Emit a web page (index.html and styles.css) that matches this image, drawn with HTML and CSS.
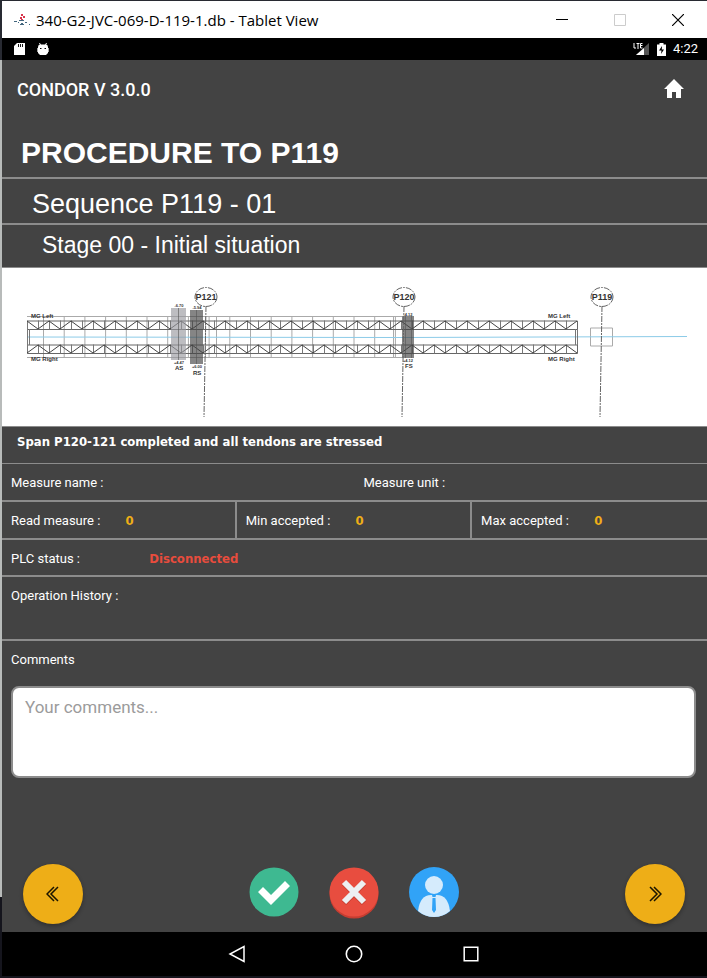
FILE: index.html
```html
<!DOCTYPE html>
<html lang="en">
<head>
<meta charset="utf-8">
<meta name="viewport" content="width=device-width, initial-scale=1">
<title>340-G2-JVC-069-D-119-1.db - Tablet View</title>
<link rel="stylesheet" href="styles.css">
</head>
<body>
<div class="window">
  <div class="titlebar">
    <svg class="titlebar-logo" width="18" height="14" viewBox="0 0 18 14" aria-hidden="true">
      <path d="M8 2h2M7 5h2M10 4h2M8 7h2" stroke="#d8344c" stroke-width="2"/>
      <path d="M1 8.500h3M5 9.500h1M6 7.500h5M8 10.500h2M12 9.500h2M16 11.500h1M7 11.500h4" stroke="#42667e" stroke-width="1"/>
    </svg>
    <span class="titlebar-text">340-G2-JVC-069-D-119-1.db - Tablet View</span>
    <button class="win-button" aria-label="Minimize"><svg width="12" height="12" viewBox="0 0 12 12"><path d="M0 5.500h12" stroke="#000"/></svg></button>
    <button class="win-button" aria-label="Maximize" disabled><svg width="12" height="12" viewBox="0 0 12 12"><path d="M.5.5h11v11H.5z" fill="none" stroke="#ccc"/></svg></button>
    <button class="win-button" aria-label="Close"><svg width="12" height="12" viewBox="0 0 12 12"><path d="M0 0l12 12M12 0L0 12" stroke="#000" stroke-width="1.200"/></svg></button>
  </div>

  <div class="statusbar">
    <svg width="11" height="12" viewBox="0 0 11 12" aria-hidden="true"><path d="M3 0h8v12H0V3z" fill="#fff"/><path d="M4.500 1v3M6.500 1v3M8.500 1v3" stroke="#000" stroke-width=".9"/></svg>
    <svg class="status-robot" width="12" height="13" viewBox="0 0 12 13" aria-hidden="true"><path d="M2.500 0l1 2M9.500 0l-1 2" stroke="#fff"/><path d="M1 4Q1 1.500 3 1.500h6q2 0 2 2.500V10l-2 2H3l-2-2z" fill="#fff"/><path d="M0 5h1v4H0zM11 5h1v4h-1z" fill="#aaa"/><path d="M3 5h1.500v1H3zM7.500 5H9v1H7.500z" fill="#000"/></svg>
    <span class="status-space"></span>
    <svg width="17" height="14" viewBox="0 0 17 14" aria-hidden="true"><path d="M16 1v12H3z" fill="#555"/><path d="M11 6v7H3z" fill="#fff"/><path d="M1 1v5h2M3.500 1.500h3M5 1.500V7M9.500 1.500H7.500V6h2M7.500 3.500h2" fill="none" stroke="#fff"/></svg>
    <svg class="status-battery" width="9" height="13" viewBox="0 0 9 13" aria-hidden="true"><path d="M0 1.500h2.500V0h4v1.500H9V13H0z" fill="#fff"/><path d="M5 3L2 7.500h2.500L4 11l3-4.500H4.800z" fill="#000"/></svg>
    <span class="status-time">4:22</span>
  </div>

  <header class="appbar">
    <span class="appbar-title">CONDOR V 3.0.0</span>
    <button class="icon-button" aria-label="Home"><svg width="24" height="24" viewBox="0 0 24 24"><path d="M10 20v-6h4v6h5v-9h3L12 1 2 11h3v9z" fill="#fff"/></svg></button>
  </header>

  <main class="content">
    <h1 class="procedure">PROCEDURE TO P119</h1>
    <h2 class="sequence">Sequence P119 - 01</h2>
    <h3 class="stage">Stage 00 - Initial situation</h3>

    <svg class="diagram" viewBox="0 0 705 158" role="img" aria-label="Gantry position between piers P121, P120 and P119">
      <!-- span deck grid -->
      <g fill="none" stroke="#aaa">
        <path d="M25 48.500H400M25 89.500H400"/>
        <path d="M41 69H400" stroke-width="41" stroke-dasharray="1 19.700"/>
        <path d="M203.500 48v41M214.500 48v41M391.500 48v41"/>
        <path d="M588.500 60v18h22V60z"/>
      </g>
      <!-- axis -->
      <path d="M25 69L400 69.500 685 68.500" fill="none" stroke="#8ccbe8"/>
      <!-- gantry trusses -->
      <g fill="none" stroke="#444">
        <path d="M25.500 53H575.500V61.500H25.500zM25.500 77H575.500V85.500H25.500z" stroke="#666"/>
        <path d="M25 57H575M25 81H575" stroke-width="9" stroke-dasharray="1 10" stroke="#777"/>
        <path d="M25.500 61v16M27.500 61v16M573.500 61v16M575.500 61v16" stroke="#777"/>
        <path d="M25 53l11 8 11-8 11 8 11-8 11 8 11-8 11 8 11-8 11 8 11-8 11 8 11-8 11 8 11-8 11 8 11-8 11 8 11-8 11 8 11-8 11 8 11-8 11 8 11-8 11 8 11-8 11 8 11-8 11 8 11-8 11 8 11-8 11 8 11-8 11 8 11-8 11 8 11-8 11 8 11-8 11 8 11-8 11 8 11-8 11 8 11-8 11 8 11-8 11 8 11-8"/>
        <path d="M25 85l11-8 11 8 11-8 11 8 11-8 11 8 11-8 11 8 11-8 11 8 11-8 11 8 11-8 11 8 11-8 11 8 11-8 11 8 11-8 11 8 11-8 11 8 11-8 11 8 11-8 11 8 11-8 11 8 11-8 11 8 11-8 11 8 11-8 11 8 11-8 11 8 11-8 11 8 11-8 11 8 11-8 11 8 11-8 11 8 11-8 11 8 11-8 11 8 11-8 11 8"/>
      </g>
      <!-- supports -->
      <g fill-opacity=".65">
        <path d="M169 40h15v52h-15z" fill="#99999f"/>
        <path d="M188 42h13v54h-13z" fill="#444"/>
        <path d="M400 48h12v42h-12z" fill="#444"/>
      </g>
      <g fill="none" stroke="#555" stroke-opacity=".6">
        <path d="M176.500 40v52M194.500 42v54M403.500 48v42M409.500 48v42"/>
      </g>
      <!-- piers -->
      <g fill="none" stroke="#666" stroke-dasharray="6 1 2 1">
        <ellipse cx="204" cy="29" rx="11" ry="9.500"/>
        <ellipse cx="402" cy="29" rx="11" ry="9.500"/>
        <ellipse cx="600" cy="29" rx="11" ry="9.500"/>
        <path d="M204 38L202 149M402 38L400 149M600 38L598 149"/>
      </g>
      <g class="pier-name">
        <text x="204" y="32">P121</text>
        <text x="402" y="32">P120</text>
        <text x="600" y="32">P119</text>
      </g>
      <g class="girder-name">
        <text x="29" y="50">MG Left</text>
        <text x="29" y="93">MG Right</text>
        <text x="546" y="50">MG Left</text>
        <text x="546" y="93">MG Right</text>
        <text x="173" y="102">AS</text>
        <text x="191" y="107">RS</text>
        <text x="403" y="100">FS</text>
      </g>
      <g class="offset">
        <text x="177" y="39">-6.70</text>
        <text x="195" y="41">-5.94</text>
        <text x="406" y="48">-4.12</text>
        <text x="177" y="96">+4.47</text>
        <text x="195" y="100">+6.00</text>
        <text x="406" y="94">+4.12</text>
      </g>
    </svg>

    <p class="note">Span P120-121 completed and all tendons are stressed</p>
    <div class="row halves"><span class="cell">Measure name :</span><span class="cell">Measure unit :</span></div>
    <div class="row thirds">
      <div class="cell">Read measure : <output class="value">0</output></div>
      <div class="cell">Min accepted : <output class="value">0</output></div>
      <div class="cell">Max accepted : <output class="value">0</output></div>
    </div>
    <div class="row plc"><div class="cell">PLC status : <output class="disconnected">Disconnected</output></div></div>
    <div class="row history"><span class="cell">Operation History :</span></div>
    <div class="comments">
      <label for="comments">Comments</label>
      <textarea id="comments" placeholder="Your comments..."></textarea>
    </div>
  </main>

  <div class="actions">
    <button class="fab" aria-label="Previous"><svg width="14" height="16" viewBox="0 0 14 16"><path d="M8 1L1 8l7 7M12 1L5 8l7 7" fill="none" stroke="#1c1500" stroke-width="1.500"/></svg></button>
    <div class="decisions">
      <button class="round" aria-label="Accept"><svg width="50" height="50" viewBox="0 0 50 50"><circle cx="25" cy="25" r="24.500" fill="#3eb991"/><path d="M9 25l5-5 8 8 14-14 5 5-19 19z" fill="#fff"/></svg></button>
      <button class="round" aria-label="Reject"><svg width="50" height="52" viewBox="0 0 50 52"><circle cx="25" cy="27" r="24.500" fill="#c63d31"/><circle cx="25" cy="25" r="24.500" fill="#e84d3f"/><path d="M15 16l20 20M35 16L15 36" stroke="#c23c30" stroke-width="6"/><path d="M15 15l20 20M35 15L15 35" stroke="#edf0f2" stroke-width="6"/></svg></button>
      <button class="round" aria-label="User"><svg width="50" height="50" viewBox="0 0 50 50"><circle cx="25" cy="25" r="25" fill="#31a3f7"/><circle cx="25" cy="18" r="9" fill="#d5ebfc"/><path d="M9 44Q11 28 22 28h6q11 0 13 16-7 6-16 6T9 44z" fill="#d5ebfc"/><path d="M23 28h4l-.5 2h-3zM23.500 31h3l.5 12-2 3-2-3z" fill="#31a3f7"/></svg></button>
    </div>
    <button class="fab" aria-label="Next"><svg width="14" height="16" viewBox="0 0 14 16"><path d="M2 1l7 7-7 7M6 1l7 7-7 7" fill="none" stroke="#1c1500" stroke-width="1.500"/></svg></button>
  </div>

  <nav class="navbar" aria-label="System">
    <button class="nav-button" aria-label="Back"><svg width="18" height="18" viewBox="0 0 18 18"><path d="M16 1.500v15L2 9z" fill="none" stroke="#fff" stroke-width="1.500"/></svg></button>
    <button class="nav-button" aria-label="Home screen"><svg width="18" height="18" viewBox="0 0 18 18"><circle cx="9" cy="9" r="7.700" fill="none" stroke="#fff" stroke-width="1.600"/></svg></button>
    <button class="nav-button" aria-label="Recent apps"><svg width="18" height="18" viewBox="0 0 18 18"><path d="M2.200 2.200h13.600v13.600H2.200z" fill="none" stroke="#fff" stroke-width="1.500"/></svg></button>
  </nav>
</div>
</body>
</html>
```
FILE: styles.css
```css
* { box-sizing: border-box; }

body {
  margin: 0;
  padding: 1px 0 2px 2px;
  min-height: 100vh;
  display: flex;
  background: linear-gradient(#282a32 60px, #b8bbba 60px, #b8bbba 897px, #15151d 897px);
  color: #fff;
  font: 13px/16px Roboto, sans-serif;
}

button {
  display: flex;
  align-items: center;
  justify-content: center;
  padding: 0;
  border: 0;
  background: none;
}

.window {
  flex: 1;
  min-width: 0;
  display: flex;
  flex-direction: column;
  background: #434343;
}

.titlebar {
  display: flex;
  align-items: center;
  height: 37px;
  padding-left: 11px;
  background: #fff;
  color: #000;
}
.titlebar-text {
  flex: 1;
  margin-left: 5px;
  font: 15px/20px "Open Sans", sans-serif;
  white-space: nowrap;
}
.win-button { width: 58px; height: 37px; }

.statusbar {
  display: flex;
  align-items: center;
  height: 22px;
  padding: 0 9px 0 12px;
  background: #000;
}
.status-robot { margin-left: 12px; }
.status-space { flex: 1; }
.status-battery { margin: 0 7px; }

.appbar {
  display: flex;
  align-items: center;
  justify-content: space-between;
  height: 60px;
  padding: 0 21px 0 15px;
}
.appbar-title { font-size: 18px; font-weight: 500; }

h1, h2, h3, p { margin: 0; }
.procedure, .sequence, .stage { font-family: "Liberation Sans", Arial, sans-serif; }
.procedure {
  padding: 14px 19px 6px;
  border-bottom: 2px solid #8c8c8c;
  font-size: 30px;
  line-height: 37px;
}
.sequence {
  padding: 7px 30px 1px;
  border-bottom: 2px solid #8c8c8c;
  font-size: 27px;
  font-weight: 400;
  line-height: 36px;
}
.stage {
  padding: 4px 40px 6px;
  border-bottom: 1px solid #8c8c8c;
  font-size: 23px;
  font-weight: 400;
  line-height: 32px;
}

.diagram { display: block; width: 100%; background: #fff; }
.diagram text { font-family: "Liberation Sans", Arial, sans-serif; fill: #333; }
.diagram .pier-name text { font-size: 9px; font-weight: 700; text-anchor: middle; }
.diagram .girder-name text { font-size: 6px; font-weight: 700; }
.diagram .offset text { font-size: 4px; font-weight: 700; text-anchor: middle; }

.note {
  padding: 7px 15px 13px;
  border-top: 1px solid #8c8c8c;
  border-bottom: 1px solid #8c8c8c;
}
.note, .value, .disconnected { font: 700 13px/16px "DejaVu Sans Condensed", "DejaVu Sans", sans-serif; }

.row { display: grid; border-bottom: 2px solid #8c8c8c; }
.cell { padding: 11px 9px 9px; }
.halves { grid-template-columns: 1fr 1fr; }
.thirds { grid-template-columns: 33% 33.4% 1fr; }
.thirds .cell + .cell { border-left: 2px solid #8c8c8c; }
.plc .cell { padding-bottom: 8px; }
.value { margin-left: 22px; color: #eeae17; }
.disconnected { margin-left: 66px; color: #e84c3d; }
.history { min-height: 64px; }

.comments { padding: 11px 11px 0 9px; }
.comments label { display: block; margin-bottom: 18px; }
.comments textarea {
  display: block;
  width: 100%;
  height: 92px;
  padding: 9px 12px;
  border: 2px solid #8c8c8c;
  border-radius: 8px;
  background: #fff;
  font: 17px/20px Roboto, sans-serif;
  resize: none;
}
.comments textarea::placeholder { color: #9b9b9b; }

.actions {
  display: flex;
  align-items: center;
  justify-content: space-between;
  margin-top: auto;
  padding: 16px 22px 8px 21px;
}
.fab {
  width: 60px;
  height: 60px;
  border-radius: 50%;
  background: #eeae17;
  box-shadow: 0 2px 4px rgba(0, 0, 0, .3);
}
.decisions { display: flex; gap: 30px; padding: 0 1px 4px 0; }
.round { align-items: flex-start; width: 50px; height: 50px; }

.navbar {
  display: flex;
  justify-content: center;
  height: 44px;
  padding-right: 2px;
  background: #000;
}
.nav-button { width: 117px; }
```
